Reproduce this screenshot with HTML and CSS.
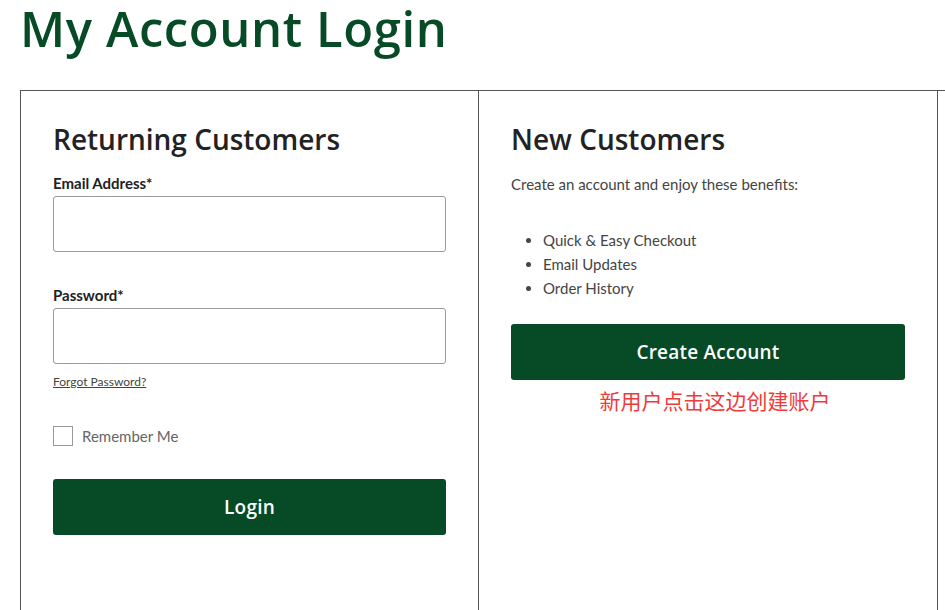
FILE: index.html
```html
<!DOCTYPE html>
<html lang="en">
<head>
<meta charset="utf-8">
<title>My Account Login</title>
<link rel="stylesheet" href="styles.css">
</head>
<body>
<main class="page">
  <h1 class="page-title">My Account Login</h1>
  <div class="panels">
    <section class="panel">
      <h2 class="panel-title">Returning Customers</h2>
      <form class="login-form">
        <label class="field-label" for="email">Email Address*</label>
        <input class="field-input" id="email" type="email">
        <label class="field-label pw-label" for="pw">Password*</label>
        <input class="field-input" id="pw" type="password">
        <a class="forgot" href="#">Forgot Password?</a>
        <label class="remember"><span class="checkbox"></span><span>Remember Me</span></label>
        <button class="btn" type="button">Login</button>
      </form>
    </section>
    <section class="panel">
      <h2 class="panel-title">New Customers</h2>
      <p class="intro">Create an account and enjoy these benefits:</p>
      <ul class="benefits">
        <li>Quick &amp; Easy Checkout</li>
        <li>Email Updates</li>
        <li>Order History</li>
      </ul>
      <button class="btn btn-create" type="button">Create Account</button>
      <p class="note">新用户点击这边创建账户</p>
    </section>
  </div>
</main>
</body>
</html>
```

FILE: styles.css
```css
* { box-sizing: border-box; }
html, body { margin: 0; padding: 0; background: #fff; overflow: hidden; }
body { font-family: "Lato", "Liberation Sans", sans-serif; color: #222; }
.page { padding: 0 0 0 20px; }
.page-title {
  margin: 0;
  padding-top: 0;
  height: 90px;
  font-family: "Open Sans", "DejaVu Sans", sans-serif;
  font-weight: 600;
  font-size: 49px;
  letter-spacing: 0.6px;
  line-height: 56px;
  color: #064a26;
}
.panels {
  display: grid;
  grid-template-columns: 458px 459px;
  border-top: 1px solid #555;
  border-left: 1px solid #555;
  height: 560px;
}
.panel {
  border-right: 1px solid #555;
  padding: 30px 32px 0 32px;
}
.panel-title {
  margin: 0 0 17px;
  font-family: "Open Sans", "DejaVu Sans", sans-serif;
  font-weight: 600;
  font-size: 28px;
  line-height: 36px;
  color: #222;
}
.login-form { display: flex; flex-direction: column; align-items: flex-start; }
.field-label { font-size: 15px; font-weight: 700; line-height: 18px; margin-bottom: 4px; color: #222; }
.pw-label { margin-top: 34px; }
.field-input {
  width: 393px; height: 56px;
  border: 1px solid #999; border-radius: 3px;
  background: #fff; margin: 0;
}
.forgot {
  margin-top: 10px;
  font-size: 12px; line-height: 16px;
  color: #444; text-decoration: underline;
}
.remember {
  margin-top: 36px;
  display: flex; align-items: center; gap: 9px;
  font-size: 15px; color: #666;
}
.checkbox { width: 20px; height: 20px; border: 1px solid #999; display: block; }
.btn {
  width: 393px; height: 56px;
  margin-top: 33px;
  background: #064a26; color: #fff;
  border: 0; border-radius: 3px;
  font-family: "Open Sans", "DejaVu Sans", sans-serif;
  font-weight: 600; font-size: 19px; letter-spacing: 0.2px;
}
.intro { margin: 0; font-size: 15px; line-height: 20px; color: #444; }
.benefits {
  margin: 34px 0 0; padding-left: 32px;
  font-size: 15px; line-height: 24px; color: #444;
}
.btn-create { margin-top: 24px; width: 394px; }
.note {
  margin: 6px 0 0; width: 394px; padding-left: 14px; text-align: center;
  font-family: "Noto Sans CJK SC", sans-serif;
  font-size: 21px; line-height: 28px; color: #ee3b3b;
}
```
